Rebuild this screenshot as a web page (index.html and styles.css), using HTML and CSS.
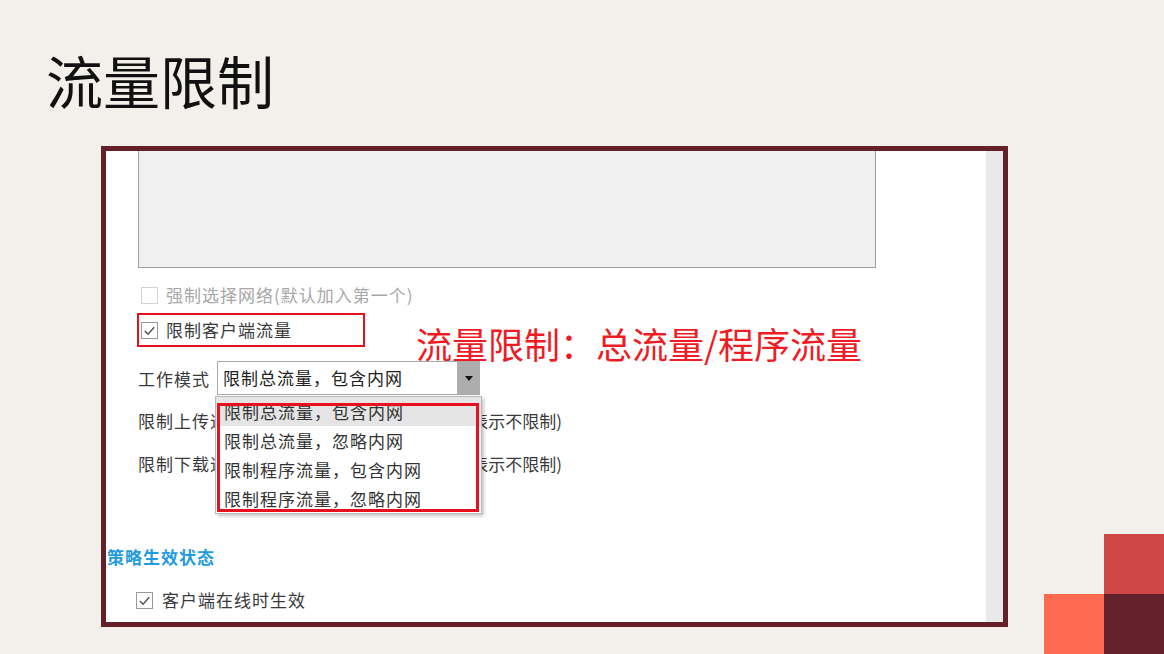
FILE: index.html
```html
<!DOCTYPE html>
<html lang="zh-CN">
<head>
  <meta charset="UTF-8">
  <title>流量限制</title>
  <link rel="stylesheet" href="styles.css">
</head>
<body>

  <h1 class="title">流量限制</h1>

  <div class="shot">
    <div class="panel">
      <div class="net-list"></div>

      <label class="check disabled"><span class="box"></span>强制选择网络(默认加入第一个)</label>

      <div class="limit-row">
        <label class="check marked">
          <span class="box"><svg viewBox="0 0 16 16"><polyline points="3,8.5 6.5,12 13,4.5" /></svg></span>限制客户端流量
        </label>
        <span class="callout">流量限制：总流量/程序流量</span>
      </div>

      <div class="mode-row">
        <span class="label">工作模式</span>
        <div class="combo">
          <span class="combo-value">限制总流量，包含内网</span>
          <span class="combo-btn"><span class="arrow"></span></span>
          <div class="combo-pop">
            <ul class="combo-list">
              <li class="hover">限制总流量，包含内网</li>
              <li>限制总流量，忽略内网</li>
              <li>限制程序流量，包含内网</li>
              <li>限制程序流量，忽略内网</li>
            </ul>
            <div class="list-mark"></div>
          </div>
        </div>
      </div>

      <div class="speed-row">
        <span class="speed-main">限制上传速度<span class="speed-input"></span>KB/s</span>
        <span class="hint">(0表示不限制)</span>
      </div>
      <div class="speed-row down">
        <span class="speed-main">限制下载速度<span class="speed-input"></span>KB/s</span>
        <span class="hint">(0表示不限制)</span>
      </div>

      <h2 class="section">策略生效状态</h2>

      <label class="check online">
        <span class="box"><svg viewBox="0 0 16 16"><polyline points="3,8.5 6.5,12 13,4.5" /></svg></span>客户端在线时生效
      </label>
    </div>
    <div class="scrollbar"></div>
  </div>

  <div class="corner">
    <span></span>
    <span class="sq-red"></span>
    <span class="sq-orange"></span>
    <span class="sq-dark"></span>
  </div>

</body>
</html>
```

FILE: styles.css
```css
html, body { margin: 0; }
body {
  width: 1164px; height: 654px; overflow: hidden; position: relative;
  background: #f3f0ec;
  font-family: "Noto Sans CJK SC", "Microsoft YaHei", sans-serif;
}

.title { margin: 0; padding: 51px 0 0 46px; font-size: 57px; line-height: 56px; font-weight: 400; color: #111; }

/* framed app window */
.shot {
  margin: 39px 0 0 101px; width: 907px; height: 481px; box-sizing: border-box;
  border: 5px solid #641f2a; background: #fff; display: flex;
}
.panel { flex: 1; padding-left: 32px; font-size: 17px; letter-spacing: 1px; color: #3a3a3a; white-space: nowrap; }
.scrollbar { width: 17px; background: #e9e9e9; }

.net-list { width: 736px; height: 116px; background: #f0f0f0; border: 1px solid #a0a0a0; border-top: 0; }

.check { display: flex; align-items: center; height: 24px; line-height: 24px; }
.check .box {
  width: 17px; height: 17px; box-sizing: border-box; margin-right: 8px;
  border: 1px solid #9a9a9a; background: #fff; display: flex;
}
.check svg { width: 15px; height: 15px; fill: none; stroke: #555; stroke-width: 1.6; }
.check.disabled { margin: 15px 0 0 3px; color: #a8a8a8; }
.check.disabled .box { border-color: #d2d2d2; }

.limit-row { display: flex; align-items: flex-start; height: 34px; margin: 6px 0 0 -1px; }
.check.marked {
  width: 228px; height: 34px; box-sizing: border-box; padding-left: 2px;
  border: 2px solid #e8101c;
}
.callout { margin: 12px 0 0 51px; font-size: 36px; line-height: 36px; letter-spacing: 0; color: #ee1c25; }

.mode-row { display: flex; align-items: center; height: 34px; margin-top: 14px; }
.mode-row .label { width: 72px; }
.combo {
  position: relative; display: flex; margin-left: 7px;
  width: 263px; height: 34px; box-sizing: border-box;
  border: 1px solid #a9a9a9; border-right: 0; background: #fff; color: #222;
}
.combo-value { flex: 1; padding-left: 5px; line-height: 32px; }
.combo-btn { width: 23px; background: #adadad; display: flex; align-items: center; justify-content: center; }
.arrow { border-left: 4px solid transparent; border-right: 4px solid transparent; border-top: 5px solid #111; }

.combo-pop {
  position: absolute; top: 34px; left: -3px; width: 267px; box-sizing: border-box;
  border: 1px solid #b9b9b9; background: #fff; box-shadow: 2px 2px 3px rgba(0, 0, 0, 0.22);
}
.combo-list { list-style: none; margin: 0; padding: 0; }
.combo-list li { height: 29px; line-height: 29px; padding-left: 8px; color: #333; }
.combo-list li.hover { background: #e5e5e5; }
.list-mark {
  position: absolute; left: 1px; top: 6px; width: 262px; height: 109px;
  box-sizing: border-box; border: 3px solid #e8101c;
}

.speed-row { display: flex; align-items: center; height: 24px; margin-top: 13px; }
.speed-row.down { margin-top: 19px; }
.speed-main { width: 318px; display: flex; align-items: center; }
.speed-input { width: 130px; height: 24px; margin: 0 8px 0 10px; border: 1px solid #a9a9a9; box-sizing: border-box; }
.hint { letter-spacing: 0; }

.section { margin: 70px 0 0 -31px; font-size: 17px; line-height: 24px; font-weight: 700; color: #1f9be0; }

.check.online { margin-top: 19px; }
.check.online .box { margin-left: -2px; margin-right: 9px; }

/* slide corner blocks */
.corner {
  position: absolute; right: 0; bottom: 0;
  display: grid; grid-template-columns: 60px 60px; grid-template-rows: 60px 60px;
}
.sq-red { background: #cf4647; }
.sq-orange { background: #fe6a4f; }
.sq-dark { background: #63222b; }
```
